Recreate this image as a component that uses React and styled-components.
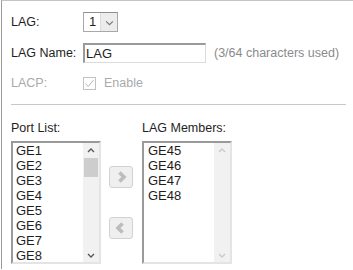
import React from 'react';
import styled, { createGlobalStyle } from 'styled-components';

const GlobalStyle = createGlobalStyle`
  body {
    margin: 0;
    background: #fff;
    font-family: "Liberation Sans", Arial, sans-serif;
    font-size: 12px;
    color: #1e1e1e;
  }
`;

const Panel = styled.div`
  height: 269px;
  border-top: 1px solid #c4c4c4;
  border-left: 1px solid #9a9a9a;
  margin-left: 1px;
  padding: 11px 0 0 9px;
  box-sizing: border-box;
`;

const Row = styled.div`
  display: flex;
  align-items: center;
  height: 20px;
  margin-bottom: ${p => p.gap || 0}px;
`;

const Label = styled.div`
  width: 72px;
  color: ${p => (p.disabled ? '#aaa' : '#1e1e1e')};
  font-size: 12.5px;
`;

const Select = styled.div`
  display: flex;
  width: 35px;
  height: 20px;
  box-sizing: border-box;
  border: 1px solid #a8a8a8;
  border-top-color: #8f8f8f;
  background: #fff;
`;

const SelectValue = styled.div`
  flex: 1;
  padding-left: 5px;
  line-height: 18px;
  font-size: 13px;
`;

const SelectButton = styled.div`
  width: 16px;
  background: #ececec;
  border-left: 1px solid #dcdcdc;
  display: flex;
  align-items: center;
  justify-content: center;
`;

const TextBox = styled.div`
  width: 123px;
  height: 20px;
  box-sizing: border-box;
  border: 1px solid #dcdcdc;
  border-top: 2px solid #9a9a9a;
  border-left: 2px solid #9a9a9a;
  padding-left: 1px;
  line-height: 17px;
  font-size: 13px;
`;

const Hint = styled.span`
  margin-left: 8px;
  color: #8a8a8a;
  font-size: 12.5px;
`;

const Check = styled.div`
  width: 13px;
  height: 13px;
  box-sizing: border-box;
  border: 1px solid #c2c2c2;
  display: flex;
  align-items: center;
  justify-content: center;
`;

const CheckText = styled.span`
  margin-left: 8px;
  color: #aaa;
  font-size: 12.5px;
`;

const Divider = styled.div`
  width: 335px;
  height: 1px;
  background: #c8c8c8;
  margin: 11px 0 16px;
`;

const Columns = styled.div`
  display: flex;
  align-items: flex-start;
`;

const Column = styled.div`
  display: flex;
  flex-direction: column;
`;

const Caption = styled.div`
  height: 14px;
  line-height: 14px;
  margin-bottom: 6px;
  font-size: 12.5px;
`;

const ListBox = styled.div`
  display: flex;
  width: 90px;
  height: 123px;
  box-sizing: border-box;
  border: 2px solid #e4e4e4;
  border-top-color: #9a9a9a;
  border-left-color: #9a9a9a;
  background: #fff;
`;

const Items = styled.div`
  flex: 1;
  padding-left: ${p => p.pad}px;
  overflow: hidden;
`;

const Item = styled.div`
  height: 15px;
  line-height: 15px;
  font-size: 13px;
`;

const Scrollbar = styled.div`
  width: 16px;
  display: flex;
  flex-direction: column;
  background: #f1f1f1;
`;

const ScrollArrow = styled.div`
  height: 15px;
  display: flex;
  align-items: center;
  justify-content: center;
`;

const Track = styled.div`
  flex: 1;
  padding: 0 1px;
`;

const Thumb = styled.div`
  height: 19px;
  background: #cdcdcd;
`;

const Movers = styled.div`
  width: 24px;
  margin: 45px 9px 0 8px;
  display: flex;
  flex-direction: column;
  gap: 29px;
`;

const MoveButton = styled.div`
  width: 24px;
  height: 22px;
  box-sizing: border-box;
  border: 1px solid #d2d2d2;
  border-radius: 3px;
  background: #efefef;
  display: flex;
  align-items: center;
  justify-content: center;
`;

const Chevron = ({ dir = 'down', color = '#666', size = 8, width = 1.3 }) => {
  const paths = {
    down: 'M1 3 L4 6 L7 3',
    up: 'M1 5 L4 2 L7 5',
    right: 'M3 1 L6 4 L3 7',
    left: 'M5 1 L2 4 L5 7',
  };
  return (
    <svg width={size} height={size} viewBox="0 0 8 8">
      <path d={paths[dir]} fill="none" stroke={color} strokeWidth={width} />
    </svg>
  );
};

const ports = ['GE1', 'GE2', 'GE3', 'GE4', 'GE5', 'GE6', 'GE7', 'GE8'];
const members = ['GE45', 'GE46', 'GE47', 'GE48'];

function List({ items, pad, active }) {
  const c = active ? '#555' : '#c8c8c8';
  return (
    <ListBox>
      <Items pad={pad}>
        {items.map(i => <Item key={i}>{i}</Item>)}
      </Items>
      <Scrollbar>
        <ScrollArrow><Chevron dir="up" color={c} /></ScrollArrow>
        <Track>{active && <Thumb />}</Track>
        <ScrollArrow><Chevron dir="down" color={c} /></ScrollArrow>
      </Scrollbar>
    </ListBox>
  );
}

export default function App() {
  return (
    <>
      <GlobalStyle />
      <Panel>
        <Row gap={11}>
          <Label>LAG:</Label>
          <Select>
            <SelectValue>1</SelectValue>
            <SelectButton><Chevron dir="down" color="#777" size={9} width={1} /></SelectButton>
          </Select>
        </Row>
        <Row gap={10}>
          <Label>LAG Name:</Label>
          <TextBox>LAG</TextBox>
          <Hint>(3/64 characters used)</Hint>
        </Row>
        <Row>
          <Label disabled>LACP:</Label>
          <Check>
            <svg width="11" height="11" viewBox="0 0 11 11">
              <path d="M1.5 5.5 L4.2 8.5 L9.5 2" fill="none" stroke="#b8b8b8" strokeWidth="1" />
            </svg>
          </Check>
          <CheckText>Enable</CheckText>
        </Row>
        <Divider />
        <Columns>
          <Column>
            <Caption>Port List:</Caption>
            <List items={ports} pad={3} active />
          </Column>
          <Movers>
            <MoveButton><Chevron dir="right" color="#bcbcbc" size={12} width={2.4} /></MoveButton>
            <MoveButton><Chevron dir="left" color="#bcbcbc" size={12} width={2.4} /></MoveButton>
          </Movers>
          <Column>
            <Caption>LAG Members:</Caption>
            <List items={members} pad={4} />
          </Column>
        </Columns>
      </Panel>
    </>
  );
}
